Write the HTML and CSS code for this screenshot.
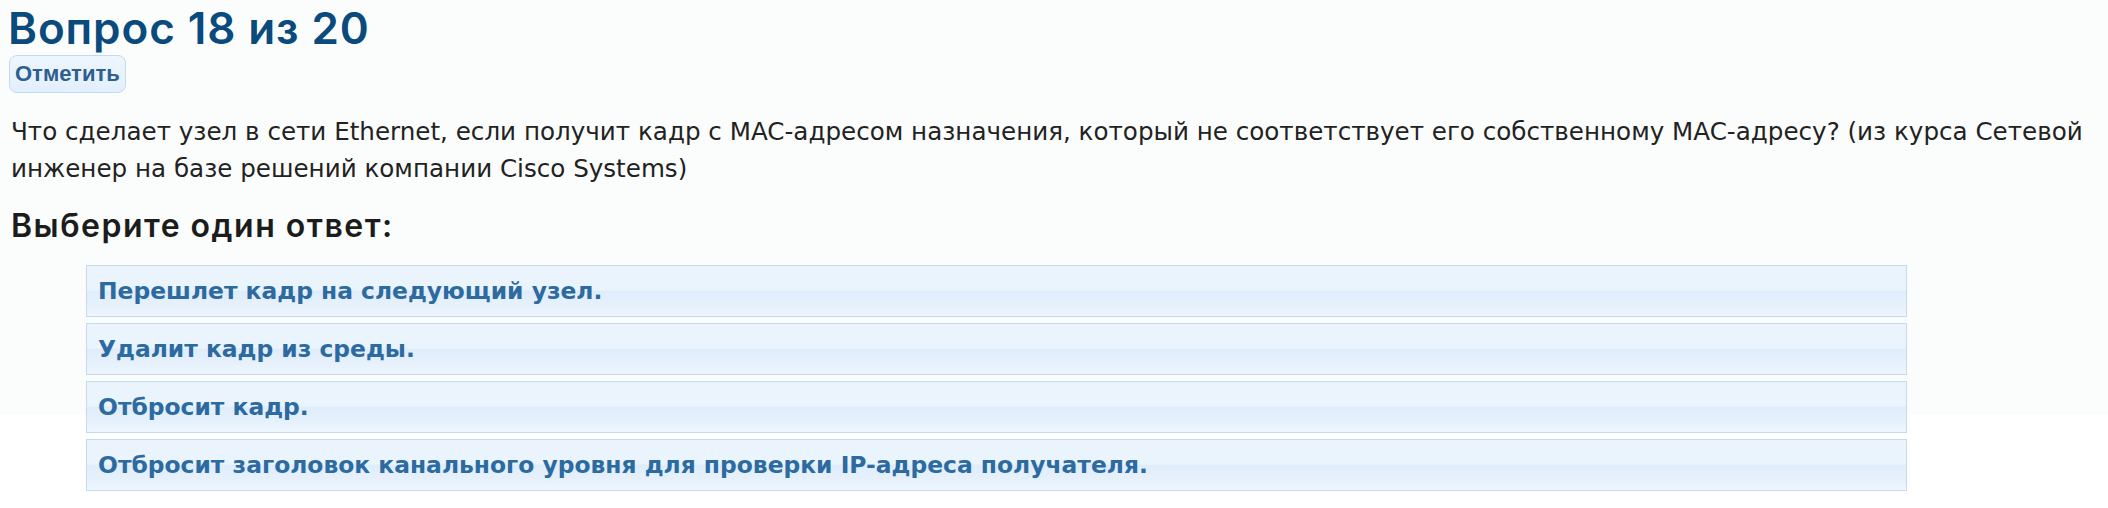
FILE: index.html
```html
<!DOCTYPE html>
<html lang="ru">
<head>
<meta charset="UTF-8">
<meta name="viewport" content="width=device-width, initial-scale=1.0">
<title>Вопрос 18 из 20</title>
<link rel="stylesheet" href="styles.css">
</head>
<body>

<div class="question">
  <h2 class="question-title">Вопрос 18 из 20</h2>
  <button type="button" class="flag-btn">Отметить</button>
  <p class="question-text">Что сделает узел в сети Ethernet, если получит кадр с MAC-адресом назначения, который не соответствует его собственному MAC-адресу? (из курса Сетевой инженер на базе решений компании Cisco Systems)</p>
  <h3 class="answer-prompt">Выберите один ответ:</h3>

  <ul class="answers">
    <li class="answer">Перешлет кадр на следующий узел.</li>
    <li class="answer">Удалит кадр из среды.</li>
    <li class="answer">Отбросит кадр.</li>
    <li class="answer">Отбросит заголовок канального уровня для проверки IP-адреса получателя.</li>
  </ul>
</div>

</body>
</html>
```

FILE: styles.css
```css
body {
  margin: 0;
  font-family: "DejaVu Sans", "Open Sans", sans-serif;
  color: #1f1f1f;
  background: linear-gradient(#fbfdfd, #fbfdfd) no-repeat;
  background-size: 100% 415px;
  background-color: #fff;
}

.question {
  padding: 0 8px;
}

.question-title {
  margin: 0;
  padding-top: 2px;
  font-family: Inter, sans-serif;
  font-size: 44px;
  font-weight: 600;
  line-height: 52px;
  color: #0b4a7c;
  letter-spacing: 0.9px;
}

.flag-btn {
  display: block;
  margin: 1px 0 0 1px;
  height: 38px;
  padding: 0 5px;
  font-family: "Liberation Sans", Arial, sans-serif;
  font-size: 22px;
  font-weight: bold;
  color: #2e5f8d;
  background: linear-gradient(#eef6fe, #e2effc);
  border: 1px solid #c3daf1;
  border-radius: 8px;
}

.question-text {
  margin: 20px 0 0 3px;
  font-size: 24.6px;
  line-height: 37px;
  color: #222;
}

.answer-prompt {
  margin: 19px 0 0 3px;
  font-family: Inter, sans-serif;
  font-size: 32px;
  font-weight: 600;
  line-height: 40px;
  letter-spacing: 1.5px;
  color: #1c1c1c;
}

.answers {
  list-style: none;
  margin: 19px 0 0 78px;
  padding: 0;
  width: 1821px;
  display: flex;
  flex-direction: column;
  gap: 6px;
}

.answer {
  height: 50px;
  padding: 0 11px;
  display: flex;
  align-items: center;
  font-size: 23.4px;
  font-weight: 700;
  color: #2c6aa0;
  border: 1px solid #c4daef;
  background: linear-gradient(#ebf4fd 0%, #eaf4fd 48%, #dfedfb 50%, #e6f1fc 80%, #eef6fe 100%);
}
```
